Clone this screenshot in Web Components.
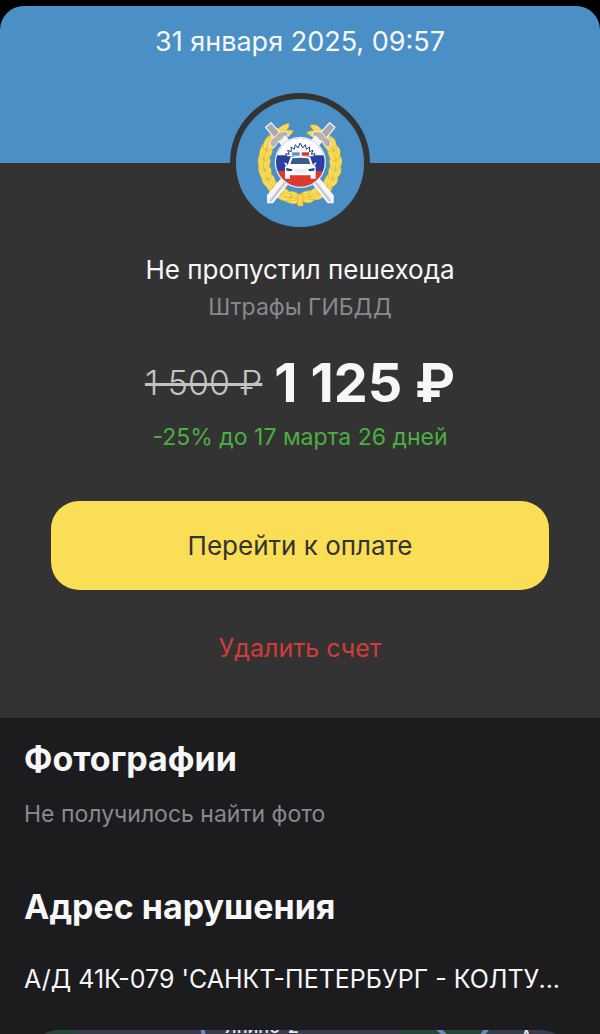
<!DOCTYPE html>
<html lang="ru">
<head>
<meta charset="utf-8">
<meta name="viewport" content="width=device-width, initial-scale=1">
<title>Штраф ГИБДД</title>
<style>
    html, body {
        height: 100%;
    }

    body {
        margin: 0;
        overflow: hidden;
        background-color: #000;
        font-family: Inter, "Liberation Sans", sans-serif;
        color: #f7f7f8;
    }
</style>
</head>
<body>
<fine-sheet>
    <fine-header slot="header">31 января 2025, 09:57</fine-header>
    <fine-summary slot="summary">
        <traffic-emblem slot="emblem"></traffic-emblem>
        <span slot="title">Не пропустил пешехода</span>
        <span slot="category">Штрафы ГИБДД</span>
        <fine-price slot="price" old="1 500 ₽" current="1 125 ₽">-25% до 17 марта 26 дней</fine-price>
        <action-button slot="actions" kind="primary">Перейти к оплате</action-button>
        <action-button slot="actions" kind="danger">Удалить счет</action-button>
    </fine-summary>
    <info-section heading="Фотографии">Не получилось найти фото</info-section>
    <info-section heading="Адрес нарушения" kind="address">А/Д 41К-079 'САНКТ-ПЕТЕРБУРГ - КОЛТУ...
        <map-preview slot="extra"></map-preview>
    </info-section>
</fine-sheet>

<script>
class FineSheet extends HTMLElement {
    constructor() {
        super();
        this.attachShadow({ mode: "open" });
        this.shadowRoot.innerHTML = `
        <style>
            :host {
                display: block;
                box-sizing: border-box;
                height: 100vh;
                padding-top: 6px;
            }

            main {
                height: 100%;
                overflow-y: auto;
                scrollbar-width: none;
                border-radius: 24px 24px 0 0;
                background-color: #1c1c1e;
            }

            .details {
                display: flex;
                flex-direction: column;
                gap: 55px;
                padding: 19px 24px 24px;
            }
        </style>
        <main>
            <slot name="header"></slot>
            <slot name="summary"></slot>
            <div class="details"><slot></slot></div>
        </main>
        `;
    }
}

class FineHeader extends HTMLElement {
    constructor() {
        super();
        this.attachShadow({ mode: "open" });
        this.shadowRoot.innerHTML = `
        <style>
            :host {
                display: block;
                padding: 20px 24px 105px;
                background-color: #4a90c6;
                text-align: center;
                font-size: 27px;
                line-height: 32px;
            }
        </style>
        <slot></slot>
        `;
    }
}

class FineSummary extends HTMLElement {
    constructor() {
        super();
        this.attachShadow({ mode: "open" });
        this.shadowRoot.innerHTML = `
        <style>
            :host {
                display: flex;
                flex-direction: column;
                align-items: center;
                padding: 0 51px 52px;
                background-color: #333;
                text-align: center;
            }

            /* the badge straddles the edge between the header and the card */
            .badge {
                display: flex;
                align-items: center;
                justify-content: center;
                box-sizing: border-box;
                width: 140px;
                height: 140px;
                margin-top: -70px;
                border: 6px solid #333;
                border-radius: 50%;
                background-color: #4a90c6;
            }

            h1 {
                margin: 19px 0 0;
                font-size: 26px;
                font-weight: 400;
                line-height: 36px;
            }

            p {
                margin: 3px 0 28px;
                color: #8a8990;
                font-size: 23px;
                line-height: 32px;
            }

            .actions {
                display: flex;
                flex-direction: column;
                align-items: center;
                gap: 40px;
                align-self: stretch;
                margin-top: 48px;
            }
        </style>
        <div class="badge"><slot name="emblem"></slot></div>
        <h1><slot name="title"></slot></h1>
        <p><slot name="category"></slot></p>
        <slot name="price"></slot>
        <div class="actions"><slot name="actions"></slot></div>
        `;
    }
}

class FinePrice extends HTMLElement {
    constructor() {
        super();
        this.attachShadow({ mode: "open" });
        this.shadowRoot.innerHTML = `
        <style>
            :host {
                display: flex;
                flex-direction: column;
                gap: 6px;
            }

            .prices {
                display: flex;
                align-items: center;
                justify-content: center;
                gap: 12px;
                line-height: 64px;
                white-space: nowrap;
            }

            s {
                color: #c3c3c5;
                font-size: 34px;
                font-weight: 300;
                text-decoration-thickness: 3px;
            }

            strong {
                font-size: 54px;
                font-weight: 700;
            }

            .discount {
                color: #4caf41;
                font-size: 23px;
                line-height: 32px;
            }
        </style>
        <div class="prices"><s></s><strong></strong></div>
        <div class="discount"><slot></slot></div>
        `;
    }

    connectedCallback() {
        this.shadowRoot.querySelector("s").innerText = this.getAttribute("old");
        this.shadowRoot.querySelector("strong").innerText = this.getAttribute("current");
    }
}

class ActionButton extends HTMLElement {
    constructor() {
        super();
        this.attachShadow({ mode: "open" });
        this.shadowRoot.innerHTML = `
        <style>
            :host {
                display: block;
            }

            :host([kind="primary"]) {
                align-self: stretch;
            }

            button {
                display: block;
                width: 100%;
                padding: 0;
                border: 0;
                background: none;
                color: #d23c39;
                font-family: inherit;
                font-size: 25px;
                line-height: 36px;
                cursor: pointer;
            }

            :host([kind="primary"]) button {
                min-height: 89px;
                border-radius: 28px;
                background-color: #fade55;
                color: #333;
                font-size: 26px;
            }
        </style>
        <button type="button"><slot></slot></button>
        `;
    }
}

class InfoSection extends HTMLElement {
    constructor() {
        super();
        this.attachShadow({ mode: "open" });
        this.shadowRoot.innerHTML = `
        <style>
            :host {
                display: block;
            }

            h2 {
                margin: 0;
                font-size: 34px;
                font-weight: 700;
                line-height: 44px;
            }

            p {
                margin: 17px 0 0;
                overflow: hidden;
                color: #8a8990;
                font-size: 23px;
                line-height: 32px;
                text-overflow: ellipsis;
                white-space: nowrap;
            }

            :host([kind="address"]) p {
                margin: 32px 0 33px;
                color: inherit;
                font-size: 25px;
                line-height: 36px;
            }
        </style>
        <section>
            <h2></h2>
            <p><slot></slot></p>
            <slot name="extra"></slot>
        </section>
        `;
    }

    connectedCallback() {
        this.shadowRoot.querySelector("h2").innerText = this.getAttribute("heading");
    }
}

class MapPreview extends HTMLElement {
    constructor() {
        super();
        this.attachShadow({ mode: "open" });
        this.shadowRoot.innerHTML = `
        <style>
            :host {
                display: block;
                height: 280px;
                overflow: hidden;
                border-radius: 36px;
                background-color: #363c4e;
            }

            svg {
                display: block;
                width: 100%;
                height: 100%;
            }

            text {
                fill: #e4e6eb;
                font-family: Inter, sans-serif;
                font-size: 18px;
                font-weight: 500;
            }
        </style>
        <svg viewBox="0 0 552 280" preserveAspectRatio="xMinYMin slice" role="img" aria-label="Карта">
            <path d="M0 0h52l-12 90-40 50z" fill="#27463b"/>
            <path d="M374 0h90l30 60-90 40z" fill="#27463b"/>
            <path d="M178-4q8 40 0 90t20 200" fill="none" stroke="#7089bd" stroke-width="4"/>
            <path d="M410-4q30 20 60 90t20 200M466-4q-30 30-60 120" fill="none" stroke="#7089bd" stroke-width="4"/>
            <text x="201" y="3">Янино-2</text>
            <text x="496" y="14">Ауди</text>
        </svg>
        `;
    }
}

class TrafficEmblem extends HTMLElement {
    constructor() {
        super();
        this.attachShadow({ mode: "open" });
        this.shadowRoot.innerHTML = `
        <style>
            :host {
                display: block;
                width: 90px;
                height: 95px;
            }

            svg {
                display: block;
                width: 100%;
                height: 100%;
            }
        </style>
        <svg viewBox="0 0 270 285" role="img" aria-label="Эмблема ГИБДД">
            <defs>
                <clipPath id="disc"><circle cx="136" cy="139" r="73"/></clipPath>
                <g id="leaf">
                    <path d="M-24 0Q-10-19 24-4Q10 18-24 0Z" fill="#f9e056" stroke="#e3b940" stroke-width="2"/>
                    <path d="M-16 0Q0-1 14-2" fill="none" stroke="#e8c247" stroke-width="2"/>
                </g>
                <g id="sword">
                    <path d="M66 72L84 54L236 238V262H218Z" fill="#f4f5f8"/>
                    <path d="M75 64L226 256" stroke="#c3c8d6" stroke-width="7"/>
                </g>
                <g id="hilt">
                    <path d="M32 34L48 20L84 60L66 76Z" fill="#a9a9ad" stroke="#eef0f3" stroke-width="4" stroke-linejoin="round"/>
                    <path d="M46 90Q42 68 60 64Q68 44 95 46L102 60Q84 58 80 71Q67 75 63 88L54 95Z" fill="#b9b3aa" stroke="#eef0f3" stroke-width="3" stroke-linejoin="round"/>
                    <path d="M77 73L94 61L103 73L87 86Z" fill="#f4f5f8"/>
                </g>
            </defs>
            <g id="wreath"></g>
            <use href="#sword"/>
            <use href="#sword" transform="matrix(-1 0 0 1 272 0)"/>
            <path d="M128 234h16v36h-16z" fill="#f8d748" stroke="#d9a936" stroke-width="2"/>
            <use href="#hilt"/>
            <use href="#hilt" transform="matrix(-1 0 0 1 272 0)"/>
            <g clip-path="url(#disc)">
                <path d="M60 60h152v60H60z" fill="#fff"/>
                <path d="M60 118h152v47H60z" fill="#2c3fa0"/>
                <path d="M60 165h152v50H60z" fill="#dc3a2e"/>
            </g>
            <circle cx="136" cy="139" r="75" fill="none" stroke="#dfe6f2" stroke-width="4"/>
            <path d="M96 121L92 113L103 115L98 103L109 107L108 93L118 100L121 86L129 96L136 81L143 96L151 86L154 100L164 93L163 107L174 103L169 115L180 113L176 121" fill="#fff" stroke="#263a86" stroke-width="3"/>
            <path d="M111 109h23v10h-23z" fill="#5b93bd"/>
            <path d="M140 109h22v10h-22z" fill="#cc3430"/>
            <path d="M107 122Q136 118 165 122L173 145L182 152V188H167V178H105V188H90V152L99 145Z" fill="#fff"/>
            <path d="M112 127Q136 123 160 127L166 144H106Z" fill="#365e86"/>
            <path d="M93 156L113 160L109 166L95 164ZM179 156L159 160L163 166L177 164Z" fill="#24466c"/>
            <path d="M118 162h36M120 168h32" stroke="#c3ccda" stroke-width="2"/>
            <path d="M87 139l10 4-4 8zM185 139l-10 4 4 8z" fill="#fff"/>
        </svg>
        `;
        this._drawWreath();
    }

    // Two branches of leaves that rise from the knot at the bottom.
    _drawWreath() {
        const wreath = this.shadowRoot.querySelector("#wreath");
        let leaves = "";
        [-1, 1].forEach((side) => {
            for (let angle = 10; angle <= 158; angle += 16) {
                const rad = angle * Math.PI / 180;
                [[116, 113, 10], [99, 97, -10]].forEach(([rx, ry, tilt]) => {
                    const x = 136 + side * rx * Math.sin(rad);
                    const y = 141 + ry * Math.cos(rad);
                    const turn = side > 0 ? -angle + tilt : 180 + angle - tilt;
                    leaves += `<use href="#leaf" transform="translate(${x.toFixed(1)} ${y.toFixed(1)}) rotate(${turn})"/>`;
                });
            }
        });
        wreath.innerHTML = leaves;
    }
}

customElements.define("fine-sheet", FineSheet);
customElements.define("fine-header", FineHeader);
customElements.define("fine-summary", FineSummary);
customElements.define("fine-price", FinePrice);
customElements.define("action-button", ActionButton);
customElements.define("info-section", InfoSection);
customElements.define("map-preview", MapPreview);
customElements.define("traffic-emblem", TrafficEmblem);
</script>
</body>
</html>
